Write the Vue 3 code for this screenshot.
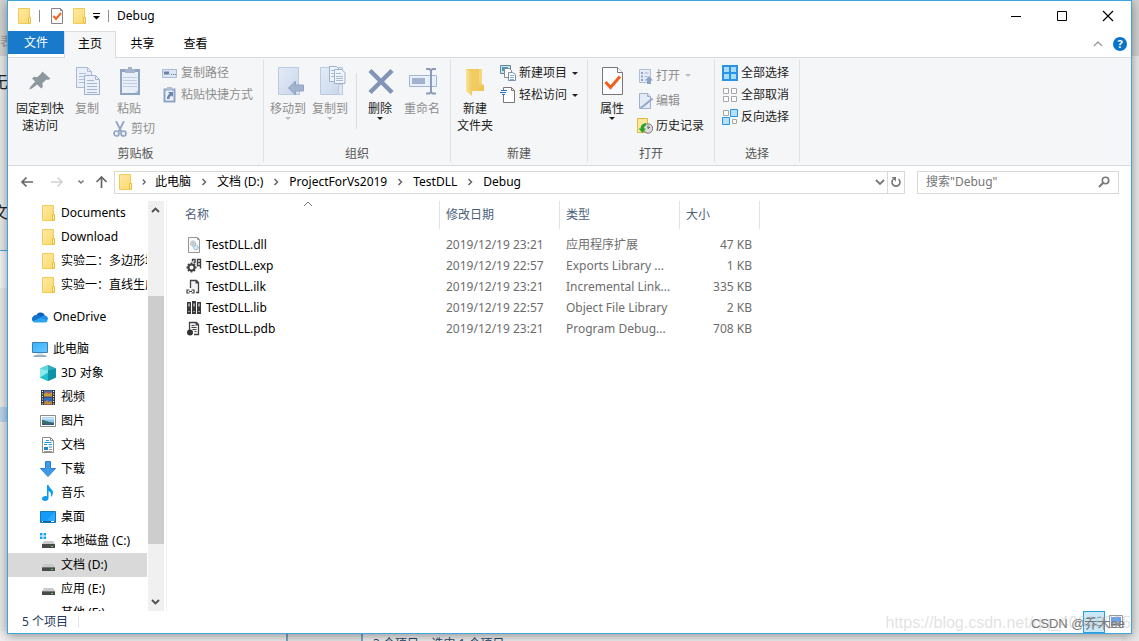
<script setup>
import { ref } from 'vue'

const crumbs = ['此电脑', '文档 (D:)', 'ProjectForVs2019', 'TestDLL', 'Debug']
const query = ref('')
const selected = ref('文档 (D:)')

const places = [
  { name: 'Documents', icon: 'folder', level: 2 },
  { name: 'Download', icon: 'folder', level: 2 },
  { name: '实验二：多边形填充', icon: 'folder', level: 2 },
  { name: '实验一：直线生成', icon: 'folder', level: 2 },
  { name: 'OneDrive', icon: 'cloud', level: 1 },
  { name: '此电脑', icon: 'pc', level: 1 },
  { name: '3D 对象', icon: 'cube', level: 2 },
  { name: '视频', icon: 'video', level: 2 },
  { name: '图片', icon: 'picture', level: 2 },
  { name: '文档', icon: 'docs', level: 2 },
  { name: '下载', icon: 'download', level: 2 },
  { name: '音乐', icon: 'music', level: 2 },
  { name: '桌面', icon: 'desktop', level: 2 },
  { name: '本地磁盘 (C:)', icon: 'sysdrive', level: 2 },
  { name: '文档 (D:)', icon: 'drive', level: 2 },
  { name: '应用 (E:)', icon: 'drive', level: 2 },
  { name: '其他 (F:)', icon: 'drive', level: 2 },
]

const files = [
  { name: 'TestDLL.dll', icon: 'f-dll', date: '2019/12/19 23:21', type: '应用程序扩展', size: '47 KB' },
  { name: 'TestDLL.exp', icon: 'f-exp', date: '2019/12/19 22:57', type: 'Exports Library ...', size: '1 KB' },
  { name: 'TestDLL.ilk', icon: 'f-ilk', date: '2019/12/19 23:21', type: 'Incremental Link...', size: '335 KB' },
  { name: 'TestDLL.lib', icon: 'f-lib', date: '2019/12/19 22:57', type: 'Object File Library', size: '2 KB' },
  { name: 'TestDLL.pdb', icon: 'f-pdb', date: '2019/12/19 23:21', type: 'Program Debug...', size: '708 KB' },
]
</script>

<template>
  <div class="desktop">
    <svg class="sprite" aria-hidden="true">
      <linearGradient id="gFolder" x1="0" y1="0" x2="1" y2="1"><stop offset="0" stop-color="#ffe9a2" /><stop offset="1" stop-color="#fbd96e" /></linearGradient>
      <linearGradient id="gScreen" x1="0" y1="0" x2="1" y2="1"><stop offset="0" stop-color="#35b0fb" /><stop offset="1" stop-color="#6cc8ff" /></linearGradient>
      <linearGradient id="gPale" x1="0" y1="0" x2="1" y2="1"><stop offset="0" stop-color="#e3ebf7" /><stop offset="1" stop-color="#c9d6ea" /></linearGradient>
      <linearGradient id="gGold" x1="0" y1="0" x2="1" y2="0"><stop offset="0" stop-color="#fbe39a" /><stop offset="1" stop-color="#f1ca60" /></linearGradient>
      <symbol id="folder" viewBox="0 0 16 16">
        <path d="M2.500.5h11v9h1v6h-12z" fill="url(#gFolder)" stroke="#f0cb58" />
        <path d="M12.500 15v-5.500h2V15z" fill="#fff0b8" stroke="#eabf3c" />
      </symbol>
      <symbol id="propsmall" viewBox="0 0 16 16">
        <path d="M2.500.5h9l2 2v13h-11z" fill="#fbfbfb" stroke="#858585" /><path d="M11.500.5v2h2" fill="none" stroke="#858585" />
        <path d="M4.500 8l2.500 3 5-6" fill="none" stroke="#f06423" stroke-width="2" />
      </symbol>
      <symbol id="cloud" viewBox="0 0 16 16">
        <path d="M4.200 7a4.500 4.500 0 0 1 8.600-.5L9 11z" fill="#0a5fba" />
        <path d="M4.500 6a4 4 0 0 0-3.800 6.200L8 12l3-3.500L7 6.300z" fill="#1073d0" />
        <path d="M12.300 6.600c2 0 3.700 1.500 3.700 3.500L14.500 12 8 8.800c1.200-1.500 2.500-2.200 4.300-2.200z" fill="#1b8fe6" />
        <path d="M.7 12.200L8.200 8.700l7.500 2.800c-.3 1.200-1.200 2-2.700 2H3.500c-1.200 0-2.200-.4-2.800-1.300z" fill="#2ba5ef" />
      </symbol>
      <symbol id="pc" viewBox="0 0 16 16">
        <path d="M.5 1.500h15v10H.5z" fill="url(#gScreen)" stroke="#3d7fb0" /><path d="M5 13h6" stroke="#aac6da" /><path d="M1.500 15.500L3 14.500h10l1.500 1z" fill="#7f9cb1" stroke="#7f9cb1" stroke-width=".6" />
      </symbol>
      <symbol id="cube" viewBox="0 0 16 16">
        <path d="M0 3.500L8 0l8 3.500v9L8 16l-8-3.500z" fill="#2cc0cc" /><path d="M0 3.500L8 0v5.500z" fill="#5fd5dc" /><path d="M8 0l8 3.500-8 2z" fill="#34a9b8" />
        <path d="M0 3.500l8 2V16l-8-3.500z" fill="#8aeaee" /><path d="M0 12.500l8-5V16z" fill="#22c0cc" /><path d="M16 3.500l-8 2V16l8-3.500z" fill="#0c93a5" />
      </symbol>
      <symbol id="video" viewBox="0 0 16 16">
        <path d="M1 1h14v15H1z" fill="#3b3b3b" /><path d="M4 1.500h8v6H4z" fill="#3676c8" /><path d="M4 8.500h8v7H4z" fill="#2f6cc4" />
        <path d="M4 5l3-2 2 2 3-2v4.500H4z" fill="#c9a03a" /><path d="M6 3l2-1 2 2-2 1z" fill="#d94b3c" /><path d="M4 14l3-3 2 2 3-1v3.500H4z" fill="#c78a3c" />
        <path d="M2.500 2v14M13.500 2v14" stroke="#fff" stroke-dasharray="1 1.500" />
      </symbol>
      <symbol id="picture" viewBox="0 0 16 16">
        <path d="M.5 2.500h15v11H.5z" fill="#fff" stroke="#8b8b8b" /><path d="M2 4h12v8H2z" fill="#8fc7ee" /><path d="M2 4.500h12v2H2z" fill="#c9e5f7" /><path d="M2 7c3 0 5 2 12 2.500V12H2z" fill="#3c6e6a" /><path d="M2 10.500h12V12H2z" fill="#345a8a" />
      </symbol>
      <symbol id="docs" viewBox="0 0 16 16">
        <path d="M2.500.5h8l3 3v12h-11z" fill="#fff" stroke="#8b8b8b" /><path d="M10.500.5v3h3" fill="none" stroke="#8b8b8b" />
        <path d="M6 3.500h3M4.500 5.500h7M4 7.500h3M8.500 7.500H12" stroke="#219bd8" /><path d="M4 10h4v3H4zM9 9.500h3v1H9z" fill="#1d86c8" /><path d="M9 12.500h3M4 14.500h8" stroke="#999" />
      </symbol>
      <symbol id="download" viewBox="0 0 16 16"><path d="M5.500.5h5v7h5L8 15.500.5 7.500h5z" fill="#3f9be8" stroke="#2b7fd0" /></symbol>
      <symbol id="music" viewBox="0 0 16 16"><path d="M7 0h1.500c.5 3 4.500 4.200 4.500 7.500 0 2-1 3.500-2.200 4.500.8-2.800.2-5-2.300-6v7.300c0 1.700-1.500 2.700-3.500 2.700-1.800 0-3-.9-3-2.200 0-1.600 1.700-2.700 3.500-2.700.6 0 1.100.1 1.500.3z" fill="#0e9cf0" /></symbol>
      <symbol id="desktop" viewBox="0 0 16 16"><path d="M.5 2.500h15v11H.5z" fill="#149bf8" stroke="#1378bf" /><path d="M15 3v10H5z" fill="#2ba9ff" /><path d="M1 12.500h14" stroke="#0a5ea5" /><path d="M2 12.500h1M11 12.500h3" stroke="#fff" /></symbol>
      <symbol id="drive" viewBox="0 0 16 16"><path d="M4 7h9l2 3H2z" fill="#c9c9c9" /><path d="M2 10h13v4H2z" fill="#4a4a4a" /><path d="M2 10.500h13" stroke="#777" /><path d="M11 12.500h2" stroke="#4fe24a" /></symbol>
      <symbol id="sysdrive" viewBox="0 0 16 16"><path d="M4 8h9l2 3H2z" fill="#c9c9c9" /><path d="M2 11h13v4H2z" fill="#4a4a4a" /><path d="M11 13.500h2" stroke="#4fe24a" /><path d="M0 0h2.500v2.500H0zM3.500 0H6v2.500H3.500zM0 3.500h2.500V6H0zM3.500 3.500H6V6H3.500z" fill="#10a9ee" /></symbol>

      <symbol id="f-dll" viewBox="0 0 16 16">
        <path d="M2.500.5h9l2 2v13h-11z" fill="#fafafa" stroke="#969696" /><path d="M11.500.5v2h2" fill="none" stroke="#969696" />
        <circle cx="7" cy="6.500" r="2.500" fill="#e5edf2" stroke="#8a9ba5" stroke-dasharray="1.200 .6" /><circle cx="7" cy="6.500" r="1" fill="none" stroke="#8a9ba5" stroke-width=".6" /><circle cx="10" cy="10.500" r="2.300" fill="#d3eaf8" stroke="#7aa6c2" stroke-dasharray="1.200 .6" />
      </symbol>
      <symbol id="f-exp" viewBox="0 0 16 16">
        <circle cx="5.500" cy="9.500" r="3" fill="none" stroke="#424242" stroke-width="2" /><path d="M5.500 4.500v2M5.500 12.500v2M.5 9.500h2M8.500 9.500h2M2 6l1.500 1.500M7.500 11.500L9 13M2 13l1.500-1.500M7.500 7.500L9 6" stroke="#424242" stroke-width="1.800" />
        <path d="M6 1.500h3v3H7.500M11.500 1.500h3v3h-3zM11.500 7.500h3M14.500 4.500v6M11.500 4.500v4M6.500 1v2.500" fill="none" stroke="#424242" stroke-width="1.400" />
      </symbol>
      <symbol id="f-ilk" viewBox="0 0 16 16">
        <path d="M4.500 9V1.500h6l2 2v10H10" fill="#f3f3f3" stroke="#424242" stroke-width="1.300" /><path d="M9.500 1v3.500h3.500z" fill="#424242" /><path d="M3.500 11H1v3h2.500M5.500 11H8v3H5.500M3 12.500h3" fill="none" stroke="#424242" stroke-width="1.200" />
      </symbol>
      <symbol id="f-lib" viewBox="0 0 16 16"><path d="M1 2h4v12H1zM6 1h4v13H6zM11 2h4v12h-4z" fill="#3a3a3a" /><path d="M2.500 3.500h1v3h-1zM7.500 3.500h1v3h-1zM12.500 3.500h1v3h-1zM2.500 11h1v1h-1zM7.500 11h1v1h-1zM12.500 11h1v1h-1z" fill="#fff" /></symbol>
      <symbol id="f-pdb" viewBox="0 0 16 16"><path d="M3.500 9V1.500h7l2 2v10H8" fill="#f5f5f5" stroke="#424242" stroke-width="1.300" /><path d="M9.500 1v3.500h3.500z" fill="#424242" /><path d="M5.500 6.500h5M6.500 8.500h4M8.500 10.500h2M5.500 4.500h3" stroke="#424242" /><circle cx="4" cy="11.500" r="3" fill="#333" /></symbol>

      <symbol id="pin" viewBox="-4 -3 40 40"><path d="M19 4l10 9-3 1.500-2-.5-5 4.500.5 4.500-2 2-5-5L6 25l-3.500 1.500L4 23l6-6.500-4-4 2.500-2 4 .5 5-4.500z" fill="#8d979e" /></symbol>
      <symbol id="copy" viewBox="0 0 32 32">
        <path d="M5.500 1.500h11l4 4v16h-15z" fill="#eaf0fa" stroke="#a9b9d3" /><path d="M16.500 1.500v4h4M8 7.500h7M8 10.500h9M8 13.500h7M8 16.500h7" fill="none" stroke="#b1c0d8" />
        <path d="M13.500 9.500h11l4 4v15h-15z" fill="#eaf0fa" stroke="#9fb1ce" /><path d="M24.500 9.500v4h4M16 14.500h7M16 17.500h10M16 20.500h10M16 23.500h10M16 26.500h10" fill="none" stroke="#a5b6d1" />
      </symbol>
      <symbol id="paste" viewBox="0 0 32 32">
        <path d="M7 3h20v26H7z" fill="#8fa4c5" /><path d="M9 6h16v20l-1 1H9z" fill="#e8eff9" /><path d="M10 11.500h14M10 14.500h14M10 17.500h14M10 20.500h14" stroke="#c1cee1" /><path d="M12 3h3V1h4v2h3v4H12z" fill="#a7b3c6" /><path d="M25 24l-3 3h3z" fill="#b9c8de" />
      </symbol>
      <symbol id="cut" viewBox="0 0 16 16"><path d="M4 0l5.500 11M12 0L6.500 11" stroke="#93a5c2" stroke-width="1.800" /><circle cx="4.500" cy="12.500" r="2.500" fill="none" stroke="#93a5c2" stroke-width="1.700" /><circle cx="11.500" cy="12.500" r="2.500" fill="none" stroke="#93a5c2" stroke-width="1.700" /></symbol>
      <symbol id="path" viewBox="0 0 16 16"><path d="M.5 4.500h14v8H.5z" fill="#dce6f4" stroke="#aabbd6" /><path d="M2 6.500l1 3 1-3 1 3 1-3 1 3M9 9.500h1M11 9.500h1M13 9.500h1" fill="none" stroke="#5a7096" /></symbol>
      <symbol id="shortcut" viewBox="0 0 16 16"><path d="M1.500 1.500h12v14h-12z" fill="#8fa4c5" /><path d="M3.500 3.500h8v10h-8z" fill="#edf2fa" /><path d="M5 0h5v3H5z" fill="#b1bed2" /><path d="M6 5h5v5L9.500 8.500C8 9.500 7.500 10.500 7.500 12H5c-.2-2.300.8-4 2.500-5.200z" fill="#6d84ac" /></symbol>
      <symbol id="moveto" viewBox="0 0 32 32"><path d="M6.500 1.500h20v27h-20z" fill="url(#gPale)" stroke="#bccadf" /><path d="M24.500 20.500h3v8h-3" fill="#d9e3f2" stroke="#b4c4db" /><path d="M16.500 22l7-7v4h8v6h-8v4z" fill="#a3b3cf" stroke="#8fa3c4" /></symbol>
      <symbol id="copyto" viewBox="0 0 32 32"><path d="M6.500 1.500h22v27h-22z" fill="url(#gPale)" stroke="#bccadf" /><path d="M24.500 18.500h4v10h-4z" fill="#dde6f3" stroke="#bccadf" /><path d="M15.500.5h7l3 3v12h-10z" fill="#f0f4fb" stroke="#9fb1ce" /><path d="M20.500 3.500h7l3.500 3v11H20.500z" fill="#f0f4fb" stroke="#9fb1ce" /><path d="M17 4.500h3M17 7.500h3M17 10.500h3M22 7.500h5M22 10.500h7M22 12.500h7M22 14.500h7" stroke="#a9b9d3" /></symbol>
      <symbol id="delete" viewBox="0 0 32 32"><path d="M6 4.500l22 22M28 4.500l-22 22" stroke="#8294b6" stroke-width="4.500" /></symbol>
      <symbol id="rename" viewBox="0 0 32 32"><path d="M3.500 9.500h27v11h-27z" fill="#e8f0fb" stroke="#a3b5d2" /><path d="M6 12h13v6H6z" fill="#a3b3cf" /><path d="M25 4v22" stroke="#8b9cbb" stroke-width="2" /><path d="M20 3h3.500L25 4.500 26.500 3H30M20 27.500h3.500L25 26l1.500 1.500H30" fill="none" stroke="#8b9cbb" stroke-width="2" /></symbol>
      <symbol id="newfolder" viewBox="0 0 32 32"><path d="M7 3h15v14l3 3v5H7z" fill="#f1ca60" /><path d="M20 3h3v14h-3z" fill="#f6d77e" /><path d="M7 3l6 3v24l-6-5z" fill="url(#gGold)" /><path d="M18 25l7-7v7z" fill="#edc455" /></symbol>
      <symbol id="newitem" viewBox="0 0 16 16"><path d="M.5.500h10v8H.5z" fill="#cfe6f0" stroke="#5c8795" /><path d="M2 2h6v4H2z" fill="#4696bd" /><path d="M4.500 3.500h5l2 2v7h-7z" fill="#fff" stroke="#888" /><path d="M8.500 7.500h4l3 2v6h-7z" fill="#fff" stroke="#7890b0" /><path d="M10 10.500h4M10 12.500h4M10 14.500h4" stroke="#8cadd0" /></symbol>
      <symbol id="easy" viewBox="0 0 16 16"><path d="M3.500 8v7.500h11v-12l-3-3h-8V3" fill="#fff" stroke="#777" /><path d="M11.500.5v3h3" fill="none" stroke="#777" /><path d="M1 3.500h6M0 5.500h6M2 7.500h3" stroke="#2476c8" stroke-width="1.200" /></symbol>
      <symbol id="props" viewBox="0 0 32 32"><path d="M6.500 1.500h15l5 5v22h-20z" fill="#fbfcfd" stroke="#777" /><path d="M21.500 1.500v5h5" fill="#fff" stroke="#777" /><path d="M9.500 16l5 5.500L24 10.500" fill="none" stroke="#f1601a" stroke-width="3" /></symbol>
      <symbol id="open" viewBox="0 0 16 16"><path d="M2.500 1.500h11v13h-11z" fill="#e5ecf7" stroke="#b1bfd6" /><path d="M4 4h2v2H4zM4 7.500h2v2H4zM4 11h2v2H4z" fill="#8ea2c3" /><path d="M7.500 5h4M7.500 8.500h3M7.500 12h1" stroke="#a3b4d0" /><path d="M12 8l4 4.500h-2V16h-4v-3.500H8z" fill="#8ea2c3" /></symbol>
      <symbol id="edit" viewBox="0 0 16 16"><path d="M2.500.5h8l3 3v12h-11z" fill="#e3ebf7" stroke="#9fb1ce" /><path d="M10.500.5v3h3" fill="none" stroke="#9fb1ce" /><path d="M15.500 5.500L7 12.500l-3.500 2.500" stroke="#94a8c8" stroke-width="2" fill="none" /></symbol>
      <symbol id="history" viewBox="0 0 16 16"><path d="M.5.5h10v14H.5z" fill="#ffe79b" stroke="#e1b93d" /><circle cx="11" cy="10.500" r="4.700" fill="#ddd" stroke="#777" /><path d="M11 7.500v3l2-1.500" fill="none" stroke="#555" /><path d="M9 5C5 5.500 3.500 8 3.700 10.500H1.500l4 4.500 3.500-4.500H7c0-1.500.5-2.500 2-3z" fill="#29a52d" /></symbol>
      <symbol id="selall" viewBox="0 0 16 16"><path d="M1 1h14v14H1zM8 1v14M1 8h14" fill="#a9dcfa" stroke="#2b93e3" stroke-width="2" /></symbol>
      <symbol id="selnone" viewBox="0 0 16 16"><path d="M1.500 1.500h5v5h-5zM9.500 1.500h5v5h-5zM1.500 9.500h5v5h-5zM9.500 9.500h5v5h-5z" fill="#fff" stroke="#a6a6a6" /></symbol>
      <symbol id="selinv" viewBox="0 0 16 16"><path d="M1.500 1.500h5v5h-5zM10.500 10.500h4v4h-4z" fill="#fff" stroke="#a6a6a6" /><path d="M8.500.5h7v7h-7zM.5 8.500h7v7h-7z" fill="#b7e0fb" stroke="#2b93e3" /></symbol>
    </svg>

    <div class="backdrop" aria-hidden="true">
      <div class="strip-top"></div>
      <span class="frag f1">表</span>
      <span class="frag f2">无</span>
      <span class="frag f3">文</span>
      <div class="blue-line"></div>
      <div class="blue-cell"></div>
      <div class="lower-left"></div>
      <div class="lower-panel">3 个项目 &nbsp;&nbsp; 选中 1 个项目</div>
    </div>

    <div class="window">
      <header class="titlebar">
        <svg class="i16"><use href="#folder" /></svg>
        <span class="bar"></span>
        <button class="plain" aria-label="属性"><svg class="i16"><use href="#propsmall" /></svg></button>
        <button class="plain" aria-label="新建文件夹"><svg class="i16"><use href="#folder" /></svg></button>
        <button class="plain" aria-label="自定义快速访问工具栏"><svg class="qa" viewBox="0 0 8 8"><path d="M0 1.500h7" stroke="#000" /><path d="M0 4h7L3.500 7.500z" /></svg></button>
        <span class="bar"></span>
        <h1>Debug</h1>
        <div class="caption">
          <button aria-label="最小化"><svg viewBox="0 0 12 12"><path d="M1 6.500h10" stroke="#000" /></svg></button>
          <button aria-label="最大化"><svg viewBox="0 0 12 12"><path d="M1.500 1.500h9v9h-9z" fill="none" stroke="#000" /></svg></button>
          <button aria-label="关闭"><svg viewBox="0 0 12 12"><path d="M1 1l10 10M11 1L1 11" stroke="#000" stroke-width="1.200" /></svg></button>
        </div>
      </header>

      <nav class="tabs">
        <button class="tab file">文件</button>
        <button class="tab active">主页</button>
        <button class="tab">共享</button>
        <button class="tab">查看</button>
        <div class="tab-tools">
          <button class="plain" aria-label="最小化功能区"><svg class="chev" viewBox="0 0 10 6"><path d="M1 5l4-4 4 4" fill="none" stroke="#999" stroke-width="1.300" /></svg></button>
          <button class="help" aria-label="帮助">?</button>
        </div>
      </nav>

      <section class="ribbon">
        <div class="group g1">
          <div class="tools">
            <button class="big pin"><svg class="i32"><use href="#pin" /></svg><span>固定到快<br />速访问</span></button>
            <button class="big copy off"><svg class="i32"><use href="#copy" /></svg><span>复制</span></button>
            <div class="paste-col">
              <button class="big off"><svg class="i32"><use href="#paste" /></svg><span>粘贴</span></button>
              <button class="small cut off"><svg class="i16"><use href="#cut" /></svg>剪切</button>
            </div>
            <div class="list">
              <button class="small off"><svg class="i16"><use href="#path" /></svg>复制路径</button>
              <button class="small off"><svg class="i16"><use href="#shortcut" /></svg>粘贴快捷方式</button>
            </div>
          </div>
          <div class="group-name">剪贴板</div>
        </div>
        <div class="group g2">
          <div class="tools">
            <button class="big off"><svg class="i32"><use href="#moveto" /></svg><span>移动到</span><i class="tri"></i></button>
            <button class="big off"><svg class="i32"><use href="#copyto" /></svg><span>复制到</span><i class="tri"></i></button>
            <span class="inner-sep"></span>
            <button class="big"><svg class="i32"><use href="#delete" /></svg><span>删除</span><i class="tri"></i></button>
            <button class="big off"><svg class="i32"><use href="#rename" /></svg><span>重命名</span></button>
          </div>
          <div class="group-name">组织</div>
        </div>
        <div class="group g3">
          <div class="tools">
            <button class="big"><svg class="i32"><use href="#newfolder" /></svg><span>新建<br />文件夹</span></button>
            <div class="list">
              <button class="small"><svg class="i16"><use href="#newitem" /></svg>新建项目<i class="tri"></i></button>
              <button class="small"><svg class="i16"><use href="#easy" /></svg>轻松访问<i class="tri"></i></button>
            </div>
          </div>
          <div class="group-name">新建</div>
        </div>
        <div class="group g4">
          <div class="tools">
            <button class="big"><svg class="i32"><use href="#props" /></svg><span>属性</span><i class="tri"></i></button>
            <div class="list">
              <button class="small off"><svg class="i16"><use href="#open" /></svg>打开<i class="tri"></i></button>
              <button class="small off"><svg class="i16"><use href="#edit" /></svg>编辑</button>
              <button class="small"><svg class="i16"><use href="#history" /></svg>历史记录</button>
            </div>
          </div>
          <div class="group-name">打开</div>
        </div>
        <div class="group g5">
          <div class="tools">
            <div class="list">
              <button class="small"><svg class="i16"><use href="#selall" /></svg>全部选择</button>
              <button class="small"><svg class="i16"><use href="#selnone" /></svg>全部取消</button>
              <button class="small"><svg class="i16"><use href="#selinv" /></svg>反向选择</button>
            </div>
          </div>
          <div class="group-name">选择</div>
        </div>
      </section>

      <div class="address-row">
        <div class="history">
          <button aria-label="后退"><svg viewBox="0 0 14 14"><path d="M13 7H2M6.500 2.500L2 7l4.500 4.500" fill="none" stroke="#666" stroke-width="1.700" /></svg></button>
          <button aria-label="前进"><svg viewBox="0 0 14 14"><path d="M1 7h11M7.500 2.500L12 7l-4.500 4.500" fill="none" stroke="#d4d4d4" stroke-width="1.700" /></svg></button>
          <button class="narrow" aria-label="最近浏览的位置"><svg viewBox="0 0 14 14"><path d="M3.500 5.500L6 8l2.500-2.500" fill="none" stroke="#777" stroke-width="1.500" /></svg></button>
          <button class="narrow" aria-label="上移"><svg viewBox="0 0 14 14"><path d="M6.500 13V2M1.500 7l5-5 5 5" fill="none" stroke="#666" stroke-width="1.700" /></svg></button>
        </div>
        <div class="address">
          <svg class="i16"><use href="#folder" /></svg>
          <template v-for="c in crumbs" :key="c">
            <svg class="crumb-arrow" viewBox="0 0 26 10"><path d="M11.500 2l3 3-3 3" fill="none" stroke="#666" stroke-width="1.500" /></svg>
            <button class="plain crumb">{{ c }}</button>
          </template>
          <button class="plain drop" aria-label="以前的位置"><svg viewBox="0 0 10 10"><path d="M1 3l4 4 4-4" fill="none" stroke="#777" stroke-width="1.800" /></svg></button>
          <button class="plain refresh" aria-label="刷新"><svg viewBox="0 0 12 12"><path d="M8.500 3a4 4 0 1 1-5 0" fill="none" stroke="#777" stroke-width="1.600" /><path d="M1.500 1H6v4.500z" fill="#777" /></svg></button>
        </div>
        <label class="search">
          <input v-model="query" type="text" aria-label="搜索" placeholder='搜索"Debug"' />
          <svg viewBox="0 0 14 14"><circle cx="8.500" cy="5.500" r="3.200" fill="none" stroke="#777" stroke-width="1.600" /><path d="M6 8L2 12" stroke="#777" stroke-width="2" /></svg>
        </label>
      </div>

      <main class="content">
        <nav class="tree">
          <button
            v-for="p in places"
            :key="p.name"
            class="place"
            :class="['l' + p.level, { sel: selected === p.name, spaced: p.icon === 'cloud' }]"
            @click="selected = p.name"
          >
            <svg class="i16"><use :href="'#' + p.icon" /></svg><span>{{ p.name }}</span>
          </button>
        </nav>
        <div class="scroll" aria-hidden="true">
          <svg viewBox="0 0 16 17"><path d="M4 11l3.500-3.500L11 11" fill="none" stroke="#505050" stroke-width="1.800" /></svg>
          <div class="track"><div class="thumb"></div></div>
          <svg viewBox="0 0 16 17"><path d="M4 6l3.500 3.500L11 6" fill="none" stroke="#505050" stroke-width="1.800" /></svg>
        </div>
        <div class="files">
          <table>
            <thead>
              <tr>
                <th class="c-name">名称<svg class="sort" viewBox="0 0 10 6"><path d="M1 5l4-4 4 4" fill="none" stroke="#777" /></svg></th>
                <th class="c-mid">修改日期</th>
                <th class="c-mid">类型</th>
                <th class="c-size">大小</th>
              </tr>
            </thead>
            <tbody>
              <tr v-for="f in files" :key="f.name">
                <td><div class="fname"><svg class="i16"><use :href="'#' + f.icon" /></svg>{{ f.name }}</div></td>
                <td>{{ f.date }}</td>
                <td>{{ f.type }}</td>
                <td class="size">{{ f.size }}</td>
              </tr>
            </tbody>
          </table>
        </div>
      </main>

      <footer class="status">
        <span>5 个项目</span><span class="status-sep"></span>
        <div class="views">
          <button class="on" aria-label="详细信息"><svg class="i16" viewBox="0 0 16 16"><path d="M1 3.500h3M6 3.500h3M11 3.500h4M1 7.500h3M6 7.500h3M11 7.500h4M1 11.500h3M6 11.500h3M11 11.500h4" stroke="#7f9aa8" /></svg></button>
          <button aria-label="大图标"><svg class="i16" viewBox="0 0 16 16"><path d="M1.500 1.500h13v12h-13z" fill="#fff" stroke="#999" /><path d="M3 3h10v5H3z" fill="#6ba0ec" /><path d="M3 8h10v4H3z" fill="#a9b1ba" /></svg></button>
        </div>
      </footer>
    </div>

    <div class="mark pale">https://blog.csdn.net/qq_40018555</div>
    <div class="mark solid">CSDN @乔木ee</div>
  </div>
</template>

<style>
body {
  margin: 0;
}
</style>

<style scoped>
* {
  box-sizing: border-box;
}
.desktop {
  position: relative;
  height: 100vh;
  padding: 0 7px 7px;
  overflow: hidden;
  background: #e9e9e9;
  color: #000;
  font: 12px/16px "Noto Sans", "Noto Sans CJK SC", sans-serif;
}
.sprite {
  position: absolute;
  width: 0;
  height: 0;
}
button {
  padding: 0;
  border: 0;
  background: none;
  color: inherit;
  font: inherit;
  white-space: nowrap;
}
svg {
  display: block;
  flex: none;
}
.i16 {
  width: 16px;
  height: 16px;
}
.i32 {
  width: 32px;
  height: 32px;
}
.backdrop {
  position: absolute;
  inset: 0;
}
.strip-top {
  height: 56px;
  background: #d2d2d2;
}
.frag {
  position: absolute;
  left: -8px;
  color: #222;
  font-size: 16px;
}
.f1 {
  top: 34px;
  left: 0;
  color: #999;
  font-size: 12px;
}
.f2 {
  top: 74px;
}
.f3 {
  top: 204px;
}
.blue-line {
  position: absolute;
  top: 250px;
  left: 0;
  width: 8px;
  height: 38px;
  border-top: 1px solid #4fa8dc;
  background: #f4f4f4;
}
.blue-cell {
  position: absolute;
  top: 407px;
  left: 0;
  width: 8px;
  height: 15px;
  background: #b9d4ea;
}
.lower-left {
  position: absolute;
  bottom: 0;
  left: 0;
  width: 288px;
  height: 10px;
  border-right: 2px solid #7ba9c6;
  background: #f0f0f0;
}
.lower-panel {
  position: absolute;
  top: 632px;
  right: 18px;
  left: 361px;
  height: 20px;
  padding: 4px 10px;
  border-left: 2px solid #7ba9c6;
  background: #f0f0f0;
  color: #2a4668;
}
.window {
  position: relative;
  display: flex;
  flex-direction: column;
  height: 100%;
  border: 1px solid #3fa5e2;
  background: #fff;
  box-shadow: 0 2px 10px rgba(0, 0, 0, 0.4);
}
.titlebar {
  display: flex;
  align-items: center;
  height: 30px;
  padding-left: 8px;
}
.plain {
  display: flex;
  align-items: center;
}
.bar {
  width: 1px;
  height: 12px;
  margin: 0 9px 0 7px;
  background: #8c8c8c;
}
.titlebar .plain + .plain {
  margin-left: 6px;
}
.qa {
  width: 8px;
  height: 8px;
}
h1 {
  margin: 0;
  font-size: 12px;
  font-weight: 400;
}
.caption {
  display: flex;
  margin-left: auto;
}
.titlebar h1 {
  margin-left: -1px;
}
.caption button {
  display: grid;
  place-items: center;
  width: 46px;
  height: 29px;
}
.caption svg {
  width: 12px;
  height: 12px;
}
.tabs {
  display: flex;
  align-items: flex-start;
  height: 26px;
}
.tab {
  width: 53px;
  height: 26px;
}
.tab.file {
  width: 56px;
  height: 23px;
  background: #1979ca;
  color: #fff;
}
.tab.active {
  position: relative;
  width: 52px;
  height: 27px;
  padding-bottom: 2px;
  border: 1px solid #dadbdc;
  border-bottom: 0;
  background: #f5f6f7;
}
.tab-tools {
  display: flex;
  align-items: center;
  gap: 10px;
  margin: 6px 4px 0 auto;
}
.chev {
  width: 10px;
  height: 6px;
}
.help {
  width: 14px;
  height: 14px;
  border-radius: 50%;
  background: #0873c9;
  color: #fff;
  font-weight: 700;
  font-size: 11px;
  line-height: 14px;
}
.ribbon {
  display: flex;
  height: 109px;
  padding: 0;
  border-top: 1px solid #dadbdc;
  border-bottom: 1px solid #dadbdc;
  background: #f5f6f7;
  color: #222;
}
.group {
  display: flex;
  flex-direction: column;
  justify-content: space-between;
  margin: 2px 0 3px;
  border-right: 1px solid #e0e1e3;
}
.tools {
  display: flex;
}
.group-name {
  color: #555;
  text-align: center;
}
.big {
  display: flex;
  flex-direction: column;
  align-items: center;
  width: 42px;
  padding-top: 6px;
  line-height: 17px;
}
.big span {
  margin-top: 2px;
}
.off {
  color: #8e8e8e;
}
.tri {
  width: 0;
  border: 3px solid transparent;
  border-top-color: #222;
  border-bottom: 0;
}
.off .tri {
  border-top-color: #bbb;
}
.small {
  display: flex;
  align-items: center;
  gap: 3px;
  height: 22px;
}
.small .tri {
  margin-left: 2px;
}
.list {
  padding-top: 2px;
}
.g1 {
  width: 256px;
}
.g1 .tools {
  padding-left: 4px;
}
.pin {
  width: 56px;
}
.copy {
  width: 38px;
}
.paste-col {
  width: 46px;
}
.paste-col .big {
  width: 46px;
}
.cut {
  height: 20px;
  margin-top: 2px;
  padding-left: 6px;
}
.g1 .list {
  margin-left: 10px;
}
.g2 {
  width: 187px;
}
.g2 .tools {
  padding-left: 3px;
}
.inner-sep {
  width: 1px;
  height: 56px;
  margin: 13px 2px 0 5px;
  background: #dcdddf;
}
.g3 {
  width: 137px;
}
.g3 .big,
.g4 .big {
  width: 48px;
}
.g3 .list {
  margin-left: 1px;
}
.g4 {
  width: 127px;
}
.g4 .list {
  padding-top: 3px;
  margin-left: 1px;
}
.g4 .small {
  height: 25px;
}
.g5 {
  width: 85px;
}
.g5 .list {
  margin-left: 7px;
}
.address-row {
  display: flex;
  align-items: center;
  height: 32px;
  padding-right: 12px;
}
.history {
  display: flex;
  padding-left: 4px;
}
.history button {
  display: grid;
  place-items: center;
  width: 30px;
}
.history .narrow {
  width: 20px;
}
.history svg {
  width: 14px;
  height: 14px;
}
.address {
  display: flex;
  flex: 1;
  align-items: center;
  height: 23px;
  margin-left: 2px;
  padding-left: 2px;
  border: 1px solid #d9d9d9;
}
.crumb-arrow {
  width: 26px;
  height: 10px;
}
.crumb-arrow:nth-child(2) {
  width: 22px;
}
.drop {
  margin-left: auto;
}
.drop svg {
  width: 10px;
  height: 10px;
}
.refresh {
  justify-content: center;
  width: 17px;
  height: 21px;
  margin-left: 2px;
  border-left: 1px solid #d9d9d9;
}
.refresh svg {
  width: 12px;
  height: 12px;
}
.search {
  display: flex;
  align-items: center;
  width: 202px;
  height: 23px;
  margin-left: 12px;
  padding: 0 7px 0 8px;
  border: 1px solid #d9d9d9;
}
.search input {
  flex: 1;
  min-width: 0;
  padding: 0;
  border: 0;
  outline: 0;
  font: inherit;
}
.search input::placeholder {
  color: #757575;
}
.search svg {
  width: 14px;
  height: 14px;
}
.content {
  display: flex;
  flex: 1;
  min-height: 0;
  margin-top: 3px;
}
.tree {
  width: 139px;
  overflow: hidden;
}
.place {
  display: flex;
  align-items: center;
  gap: 5px;
  width: 100%;
  height: 24px;
  overflow: hidden;
}
.l1 {
  padding-left: 24px;
}
.l2 {
  padding-left: 32px;
}
.spaced {
  margin: 8px 0;
}
.sel {
  background: #d9d9d9;
}
.scroll {
  display: flex;
  flex-direction: column;
  width: 16px;
  margin-left: 1px;
  background: #f0f0f0;
}
.scroll > svg {
  width: 16px;
  height: 17px;
}
.track {
  display: flex;
  flex: 1;
  flex-direction: column;
  justify-content: flex-end;
  padding-bottom: 50px;
}
.thumb {
  height: 76%;
  background: #cdcdcd;
}
.files {
  flex: 1;
  margin-left: 2px;
  border-left: 1px solid #f2f2f2;
}
table {
  width: 593px;
  table-layout: fixed;
  border-collapse: separate;
  border-spacing: 0;
}
th {
  position: relative;
  height: 28px;
  padding: 0 0 0 6px;
  border-right: 1px solid #e2e2e2;
  color: #4c607a;
  font-weight: 400;
  text-align: left;
}
thead::after {
  content: "";
  display: block;
  height: 5px;
}
.c-name {
  width: 273px;
  padding-left: 18px;
}
.c-mid {
  width: 120px;
}
.c-size {
  width: 80px;
}
.sort {
  position: absolute;
  top: 0;
  left: 50%;
  width: 10px;
  height: 6px;
}
td {
  height: 21px;
  padding: 0 0 0 6px;
  color: #6d6d6d;
  white-space: nowrap;
}
.fname {
  display: flex;
  align-items: center;
  gap: 4px;
  padding-left: 13px;
  color: #000;
}
td.size {
  padding-right: 8px;
  text-align: right;
}
.status {
  display: flex;
  align-items: center;
  height: 22px;
  padding: 0 4px 0 14px;
  color: #1e395b;
}
.status-sep {
  width: 1px;
  height: 12px;
  margin-left: 10px;
  background: #e4e4e4;
}
.views {
  display: flex;
  margin-left: auto;
}
.views button {
  display: grid;
  place-items: center;
  width: 22px;
  height: 22px;
}
.views .on {
  border: 1px solid #26a0da;
  background: #cbe8f6;
}
.mark {
  position: absolute;
  font-family: "Liberation Sans", "Noto Sans CJK SC", sans-serif;
  white-space: nowrap;
}
.pale {
  right: 8px;
  bottom: 10px;
  color: rgba(180, 180, 180, 0.4);
  font-size: 16px;
}
.solid {
  right: 14px;
  bottom: 9px;
  color: #777;
  font-size: 13px;
}
</style>
